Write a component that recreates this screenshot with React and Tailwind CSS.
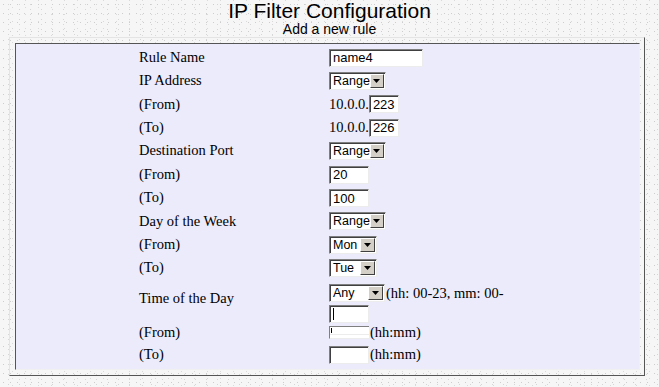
import React from 'react';

const serif = "font-['Liberation_Serif','Times_New_Roman',serif]";
const sans = "font-['Liberation_Sans',Arial,sans-serif]";

function TextBox({ value = '', w = 40, h = 18, cursor = false }) {
  return (
    <span
      className={`inline-flex items-center bg-white border border-t-[#7f7f7f] border-l-[#7f7f7f] border-b-[#ececec] border-r-[#ececec] shadow-[inset_1px_1px_0_#404040] pl-[3px] text-[13px] leading-none text-black ${sans}`}
      style={{ width: w, height: h }}
    >
      {cursor ? <span className="block w-px h-[12px] bg-black" /> : value}
    </span>
  );
}

function Select({ value, w = 57 }) {
  return (
    <span
      className={`inline-flex items-center justify-between bg-white border border-t-[#7f7f7f] border-l-[#7f7f7f] border-b-[#ececec] border-r-[#ececec] shadow-[inset_1px_1px_0_#404040] h-[18px] pl-[3px] pr-px text-[12.5px] leading-none text-black ${sans}`}
      style={{ width: w }}
    >
      <span>{value}</span>
      <span className="flex items-center justify-center w-[15px] h-[14px] bg-[#d4d0c8] border border-t-white border-l-white border-b-[#404040] border-r-[#404040]">
        <svg width="7" height="4" viewBox="0 0 7 4">
          <path d="M0 0h7L3.5 4z" fill="#000" />
        </svg>
      </span>
    </span>
  );
}

function Row({ label, children, h = 'h-[23.4px]' }) {
  return (
    <div className={`flex items-center ${h}`}>
      <div className={`w-[190px] shrink-0 text-[14.5px] text-black ${serif}`}>{label}</div>
      <div className={`flex items-center text-[14.5px] text-black ${serif}`}>{children}</div>
    </div>
  );
}

export default function App() {
  return (
    <div className="w-[659px] h-[387px] overflow-hidden bg-[#f6f6f6] bg-[radial-gradient(circle,#cdcdcd_0.6px,transparent_0.8px),radial-gradient(circle,#d6d6d6_0.6px,transparent_0.8px),radial-gradient(circle,#dadada_0.5px,transparent_0.7px)] bg-[length:7px_9px,11px_5px,13px_7px] bg-[position:0_0,3px_2px,6px_4px]">
      <div className={`text-center text-[21px] leading-[22px] text-black ${sans}`}>IP Filter Configuration</div>
      <div className={`text-center text-[14px] leading-[15px] text-black ${sans}`}>Add a new rule</div>
      <div className="ml-[9px] w-[636px] h-[339px] border border-t-[#e4e4e4] border-l-[#e4e4e4] border-b-[#555] border-r-[#555] pl-[5px] pt-[5px]">
        <div className="w-[625px] h-[327px] bg-[#ebebfb] border border-t-[#555] border-l-[#555] border-b-[#f0f0f0] border-r-[#f0f0f0] pl-[123px] pt-[2px]">
          <Row label="Rule Name"><TextBox value="name4" w={94} /></Row>
          <Row label="IP Address"><Select value="Range" /></Row>
          <Row label="(From)">10.0.0.<TextBox value="223" w={30} /></Row>
          <Row label="(To)">10.0.0.<TextBox value="226" w={30} /></Row>
          <Row label="Destination Port"><Select value="Range" /></Row>
          <Row label="(From)"><TextBox value="20" w={40} /></Row>
          <Row label="(To)"><TextBox value="100" w={40} /></Row>
          <Row label="Day of the Week"><Select value="Range" /></Row>
          <Row label="(From)"><Select value="Mon" w={48} /></Row>
          <Row label="(To)"><Select value="Tue" w={48} /></Row>
          <div className="flex items-start h-[44px] pt-[4px]">
            <div className={`w-[190px] shrink-0 pt-[4px] text-[14.5px] text-black ${serif}`}>Time of the Day</div>
            <div className={`flex flex-col items-start text-[14.5px] leading-[18px] text-black ${serif}`}>
              <div className="flex items-center">
                <Select value="Any" w={56} />
                <span className="ml-px">(hh: 00-23, mm: 00-</span>
              </div>
              <div className="mt-[3px]"><TextBox cursor w={40} /></div>
            </div>
          </div>
          <Row label="(From)" h="h-[18px]">
            <span className="relative w-[40px] h-[13px] bg-white border-t border-l border-t-[#7f7f7f] border-l-[#7f7f7f] border-b border-b-[#ececec]">
              <span className="absolute left-[1px] top-[1px] w-px h-[5px] bg-black" />
              <span className="absolute left-0 right-0 top-[7px] h-px bg-[#ececec]" />
            </span>
            <span className="ml-px">(hh:mm)</span>
          </Row>
          <Row label="(To)" h="h-[26px]">
            <TextBox w={40} />
            <span className="ml-px">(hh:mm)</span>
          </Row>
        </div>
      </div>
    </div>
  );
}
